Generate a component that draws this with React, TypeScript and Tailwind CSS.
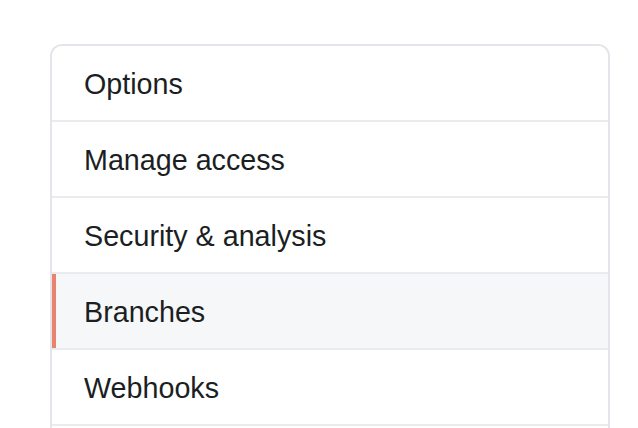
const items = ["Options", "Manage access", "Security & analysis", "Branches", "Webhooks", ""];

export default function App() {
  return (
    <div className="h-[428px] w-[638px] overflow-hidden bg-white pl-[50px] pt-[44px] font-['Liberation_Sans',sans-serif]">
      <nav className="w-[560px] overflow-hidden rounded-[12px] border-2 border-[#e4e5ea]">
        {items.map((item, i) => {
          const active = item === "Branches";
          return (
            <a
              key={i}
              className={
                "relative flex h-[76px] items-center border-b-2 border-[#eaebee] pl-[32px] pt-[3px] text-[28.7px] text-[#1b1f23] " +
                (active ? "bg-[#f6f7f9]" : "bg-white")
              }
            >
              {active && <span className="absolute left-0 top-0 h-[74px] w-[4px] bg-[#e9826f]"></span>}
              {item}
            </a>
          );
        })}
      </nav>
    </div>
  );
}
